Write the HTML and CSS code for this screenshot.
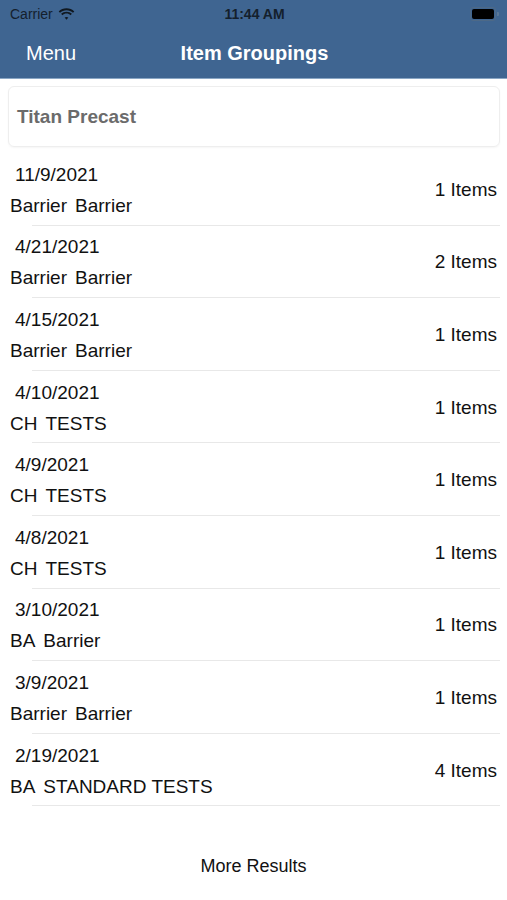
FILE: index.html
```html
<!DOCTYPE html>
<html>
<head>
<meta charset="utf-8">
<link rel="stylesheet" href="styles.css">
</head>
<body>
<div class="top">
  <div class="status">
    <div class="st-left">Carrier
      <svg class="wifi" width="17" height="12" viewBox="0 0 17 12"><path d="M8.5 2.2c2.5 0 4.8 1 6.5 2.6l1.3-1.4C14.3 1.4 11.5.2 8.5.2S2.7 1.4.7 3.4L2 4.8C3.7 3.2 6 2.2 8.5 2.2z" fill="#101820"/><path d="M8.5 5.6c1.6 0 3 .6 4.1 1.6l1.3-1.4C12.5 4.5 10.6 3.7 8.5 3.7S4.5 4.5 3.1 5.8l1.3 1.4c1.1-1 2.5-1.6 4.1-1.6z" fill="#101820"/><path d="M8.5 8.9c.8 0 1.4.3 1.9.7L8.5 11.7 6.6 9.6c.5-.4 1.1-.7 1.9-.7z" fill="#101820"/></svg>
    </div>
    <div class="st-time">11:44 AM</div>
    <div class="st-right">
      <span class="batt"><span class="batt-fill"></span></span><span class="batt-tip"></span>
    </div>
  </div>
  <div class="nav">
    <div class="nav-left">Menu</div>
    <div class="nav-title">Item Groupings</div>
    <div class="nav-right"></div>
  </div>
</div>
<div class="card">Titan Precast</div>
<ul class="list">
  <li class="row"><div class="txt"><div class="date">11/9/2021</div><div class="sub"><span>Barrier</span><span>Barrier</span></div></div><div class="count">1 Items</div></li>
  <li class="row"><div class="txt"><div class="date">4/21/2021</div><div class="sub"><span>Barrier</span><span>Barrier</span></div></div><div class="count">2 Items</div></li>
  <li class="row"><div class="txt"><div class="date">4/15/2021</div><div class="sub"><span>Barrier</span><span>Barrier</span></div></div><div class="count">1 Items</div></li>
  <li class="row"><div class="txt"><div class="date">4/10/2021</div><div class="sub"><span>CH</span><span>TESTS</span></div></div><div class="count">1 Items</div></li>
  <li class="row"><div class="txt"><div class="date">4/9/2021</div><div class="sub"><span>CH</span><span>TESTS</span></div></div><div class="count">1 Items</div></li>
  <li class="row"><div class="txt"><div class="date">4/8/2021</div><div class="sub"><span>CH</span><span>TESTS</span></div></div><div class="count">1 Items</div></li>
  <li class="row"><div class="txt"><div class="date">3/10/2021</div><div class="sub"><span>BA</span><span>Barrier</span></div></div><div class="count">1 Items</div></li>
  <li class="row"><div class="txt"><div class="date">3/9/2021</div><div class="sub"><span>Barrier</span><span>Barrier</span></div></div><div class="count">1 Items</div></li>
  <li class="row"><div class="txt"><div class="date">2/19/2021</div><div class="sub"><span>BA</span><span>STANDARD TESTS</span></div></div><div class="count">4 Items</div></li>
</ul>
<div class="more">More Results</div>
</body>
</html>
```
FILE: styles.css
```css
html, body {
  margin: 0;
  padding: 0;
  background: #ffffff;
  font-family: "Liberation Sans", Arial, sans-serif;
  color: #111111;
}
.top {
  background: #3f6591;
  border-bottom: 1px solid #8aa6c4;
}
.status {
  height: 28px;
  display: flex;
  align-items: center;
  justify-content: space-between;
  padding: 0 8px 0 10px;
  font-size: 14px;
  color: #14202c;
}
.st-left {
  display: flex;
  align-items: center;
  gap: 5px;
  width: 120px;
}
.st-time {
  font-weight: bold;
  font-size: 14px;
}
.st-right {
  width: 120px;
  display: flex;
  justify-content: flex-end;
  align-items: center;
}
.batt {
  width: 22px;
  height: 10px;
  border: 1px solid #4d6987;
  border-radius: 3px;
  padding: 1px;
  display: flex;
}
.batt-fill {
  flex: 1;
  background: #000;
  border-radius: 2px;
}
.batt-tip {
  width: 2px;
  height: 4px;
  background: #5a7797;
  border-radius: 0 1px 1px 0;
  margin-left: 1px;
}
.nav {
  height: 50px;
  display: flex;
  align-items: center;
  padding: 0 0 0 26px;
  color: #ffffff;
  font-size: 20px;
}
.nav-left {
  width: 120px;
}
.nav-title {
  flex: 1;
  text-align: center;
  font-weight: bold;
  margin-right: 146px;
  white-space: nowrap;
  margin-left: 2px;
}
.nav-right {
  display: none;
}
.card {
  margin: 7px 7px 6px 8px;
  height: 59px;
  border: 1px solid #eeeeee;
  border-radius: 6px;
  box-shadow: 0 1px 2px rgba(0,0,0,0.04);
  display: flex;
  align-items: center;
  padding-left: 8px;
  font-size: 19px;
  font-weight: bold;
  color: #6b6b6b;
}
.list {
  list-style: none;
  margin: 0;
  padding: 0;
}
.row {
  margin-left: 32px;
  margin-right: 7px;
  border-bottom: 1px solid #e8e8e8;
  display: flex;
  align-items: center;
  justify-content: space-between;
  box-sizing: border-box;
  height: 72.6px;
}
.txt {
  margin-left: -22px;
  font-size: 19px;
  line-height: 31px;
  padding-top: 2px;
}
.date {
  padding-left: 5px;
  color: #111;
}
.sub {
  display: flex;
  gap: 8px;
  color: #111;
}
.count {
  font-size: 19px;
  color: #111;
  margin-right: 3px;
  padding-top: 2px;
}
.more {
  text-align: center;
  font-size: 18px;
  margin-top: 50px;
  color: #111;
}
```
